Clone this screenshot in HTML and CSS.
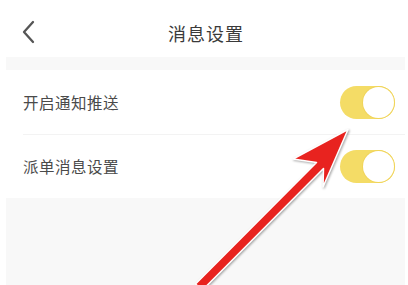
FILE: index.html
```html
<!DOCTYPE html>
<html lang="zh-CN">
<head>
    <meta charset="UTF-8">
    <meta name="viewport" content="width=device-width, initial-scale=1.0">
    <title>消息设置</title>
    <link rel="stylesheet" href="styles.css">
</head>
<body>
    <div class="screen">
        <div class="header">
            <svg class="back" width="16" height="24" viewBox="0 0 16 24">
                <path d="M12 2 L3 12 L12 22" fill="none" stroke="#555" stroke-width="2.3" stroke-linecap="round" stroke-linejoin="round"/>
            </svg>
            <h1>消息设置</h1>
        </div>

        <div class="gap"></div>

        <div class="list">
            <div class="row">
                <span class="label">开启通知推送</span>
                <div class="toggle on"><div class="knob"></div></div>
            </div>
            <div class="row">
                <span class="label">派单消息设置</span>
                <div class="toggle on"><div class="knob"></div></div>
            </div>
        </div>

        <div class="rest"></div>
    </div>

    <!-- annotation arrow drawn over the screenshot -->
    <svg class="arrow" width="408" height="285" viewBox="0 0 408 285">
        <polygon points="195.5,284 316.5,162.5 293,159 348,129.5 323,187 323.5,168.5 202.5,290" fill="#e8231f" stroke="#fff" stroke-width="1.5" stroke-linejoin="round"/>
    </svg>
</body>
</html>
```

FILE: styles.css
```css
* {
    margin: 0;
    padding: 0;
    box-sizing: border-box;
}

body {
    font-family: "Noto Sans CJK SC", "Noto Sans", sans-serif;
    background: #fff;
    width: 408px;
    height: 285px;
    overflow: hidden;
    position: relative;
}

.screen {
    margin: 0 3px 0 6px;
    height: 285px;
    display: flex;
    flex-direction: column;
}

.header {
    height: 57px;
    display: flex;
    align-items: center;
    justify-content: center;
    position: relative;
    background: #fff;
}

.header h1 {
    font-size: 18px;
    font-weight: normal;
    color: #3a3a3a;
    letter-spacing: 1px;
    margin-top: 8px;
    margin-left: 1px;
}

.back {
    position: absolute;
    left: 15px;
    top: 20px;
}

.gap {
    height: 13px;
    background: #f8f8f8;
}

.list {
    background: #fff;
}

.row {
    height: 64px;
    display: flex;
    align-items: center;
    justify-content: space-between;
    padding: 0 10px 0 17px;
}

.row + .row {
    border-top: 1px solid #f3f3f3;
    margin-left: 17px;
    padding-left: 0;
}

.label {
    font-size: 15.5px;
    color: #4a4a4a;
    letter-spacing: 0.5px;
    margin-top: -1px;
}

.toggle {
    width: 55px;
    height: 33px;
    border-radius: 17px;
    background: #f4dc66;
    position: relative;
}

.knob {
    position: absolute;
    right: 1px;
    top: 1px;
    width: 31px;
    height: 31px;
    border-radius: 50%;
    background: #fff;
    box-shadow: 0 0 0 1px #f0d45a;
}

.rest {
    flex: 1;
    background: #f8f8f8;
}

.arrow {
    position: absolute;
    left: 0;
    top: 0;
    filter: drop-shadow(1px 1px 1px rgba(0, 0, 0, 0.35));
}
```
